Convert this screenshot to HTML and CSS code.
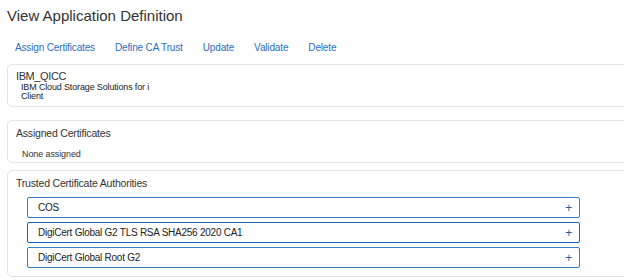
FILE: index.html
```html
<!DOCTYPE html>
<html lang="en">
<head>
    <meta charset="UTF-8">
    <title>View Application Definition</title>
    <link rel="stylesheet" href="styles.css">
</head>
<body>
    <h1 class="page-title">View Application Definition</h1>

    <div class="toolbar">
        <a href="#">Assign Certificates</a>
        <a href="#">Define CA Trust</a>
        <a href="#">Update</a>
        <a href="#">Validate</a>
        <a href="#">Delete</a>
    </div>

    <!-- Aplicação -->
    <div class="card card-app">
        <div class="app-name">IBM_QICC</div>
        <div class="app-desc">IBM Cloud Storage Solutions for i</div>
        <div class="app-desc">Client</div>
    </div>

    <div class="card card-assigned">
        <div class="card-title">Assigned Certificates</div>
        <div class="card-note">None assigned</div>
    </div>

    <div class="card card-trusted">
        <div class="card-title">Trusted Certificate Authorities</div>
        <div class="ca-list">
            <div class="ca-item"><span>COS</span><span class="plus">+</span></div>
            <div class="ca-item active"><span>DigiCert Global G2 TLS RSA SHA256 2020 CA1</span><span class="plus">+</span></div>
            <div class="ca-item"><span>DigiCert Global Root G2</span><span class="plus">+</span></div>
        </div>
    </div>
</body>
</html>
```

FILE: styles.css
```css
/* Geral */
body {
    margin: 0;
    padding: 0;
    background-color: #fff;
    font-family: 'Liberation Sans', Arial, sans-serif;
    color: #333;
    overflow: hidden;
}

.page-title {
    margin: 0;
    padding: 7px 7px 0 7px;
    height: 31px;
    font-size: 15px;
    font-weight: normal;
    color: #333;
}

/* Barra de ações */
.toolbar {
    display: flex;
    gap: 20px;
    box-sizing: border-box;
    height: 26px;
    padding: 4px 15px 0 15px;
}

.toolbar a {
    font-size: 10px;
    letter-spacing: -0.15px;
    color: #2a6ebb;
    text-decoration: none;
}

/* Cartões */
.card {
    margin-left: 7px;
    margin-right: -10px;
    border: 1px solid #e3e3e3;
    border-radius: 5px;
    box-sizing: border-box;
}

.card-app {
    height: 43px;
    padding: 4px 8px;
}

.app-name {
    font-size: 11px;
    letter-spacing: -0.4px;
    line-height: 13px;
    padding-top: 1px;
}

.app-desc {
    font-size: 9px;
    letter-spacing: -0.15px;
    line-height: 9px;
    padding-left: 5px;
    color: #222;
}

.card-assigned {
    margin-top: 13px;
    height: 43px;
    padding: 5px 8px;
}

.card-title {
    font-size: 10.5px;
    letter-spacing: -0.2px;
    line-height: 14px;
}

.card-note {
    font-size: 9px;
    letter-spacing: -0.1px;
    padding: 9px 0 0 6px;
}

.card-trusted {
    margin-top: 7px;
    height: 107px;
    padding: 5px 8px;
}

/* Lista de autoridades */
.ca-list {
    display: flex;
    flex-direction: column;
    gap: 4px;
    margin: 7px 0 0 11px;
    width: 553px;
}

.ca-item {
    display: flex;
    justify-content: space-between;
    align-items: center;
    height: 21px;
    box-sizing: border-box;
    padding: 0 7px 0 10px;
    border: 1px solid #3a7fc6;
    border-radius: 2px;
    font-size: 10px;
    letter-spacing: -0.25px;
    color: #222;
}

.ca-item.active {
    border-color: #1a63b5;
    border-width: 1.5px;
}

.plus {
    color: #1f5fa8;
    font-size: 12px;
}
```
